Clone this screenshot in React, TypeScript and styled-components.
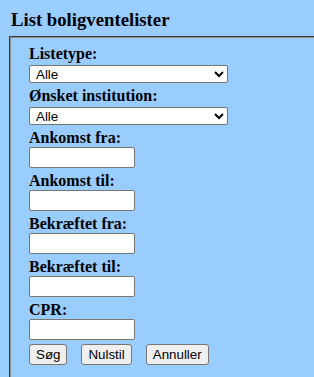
import React from 'react';
import styled, { createGlobalStyle } from 'styled-components';

const GlobalStyle = createGlobalStyle`
  html, body {
    margin: 0;
    padding: 0;
    background: #99ccff;
  }
  body {
    font-family: 'Liberation Serif', 'Times New Roman', serif;
    color: #000;
  }
`;

const Page = styled.div`
  padding: 9px 0 0 9px;
  width: 314px;
  height: 377px;
  box-sizing: border-box;
  overflow: hidden;
`;

const Title = styled.h3`
  margin: 0 0 6px 2px;
  font-size: 18.72px;
  font-weight: bold;
  line-height: 21px;
`;

const Panel = styled.fieldset`
  margin: 0;
  width: 340px;
  min-height: 360px;
  border: 2px groove #c0c0c0;
  border-color: #8e8e8e #c8c8c8 #c8c8c8 #8e8e8e;
  padding: 7px 0 0 18px;
  box-sizing: border-box;
`;

const Field = styled.div<{ $kind: 'select' | 'text' }>`
  display: flex;
  flex-direction: column;
  align-items: flex-start;
  margin-bottom: 4px;
  gap: ${({ $kind }) => ($kind === 'select' ? '2px' : '0')};
`;

const Label = styled.label`
  font-size: 16px;
  font-weight: bold;
  line-height: 18px;
`;

const Select = styled.select`
  width: 199px;
  height: 18px;
  font-family: 'Liberation Sans', Arial, sans-serif;
  font-size: 13.33px;
  background: #fff;
  border: 1px solid #767676;
  border-radius: 2px;
  padding: 0 0 0 2px;
  margin: 0;
  box-sizing: border-box;
`;

const TextInput = styled.input`
  width: 106px;
  height: 21px;
  font-family: 'Liberation Sans', Arial, sans-serif;
  font-size: 13.33px;
  background: #fff;
  border: 1px solid #767676;
  border-radius: 2px;
  padding: 1px 2px;
  margin: 0;
  box-sizing: border-box;
`;

const Buttons = styled.div`
  display: flex;
  gap: 14px;
`;

const Button = styled.button`
  height: 21px;
  font-family: 'Liberation Sans', Arial, sans-serif;
  font-size: 13.33px;
  background: #efefef;
  border: 1px solid #767676;
  border-radius: 3px;
  padding: 1px 6px;
  margin: 0;
  color: #000;
  box-sizing: border-box;
`;

const textFields = ['Ankomst fra:', 'Ankomst til:', 'Bekræftet fra:', 'Bekræftet til:', 'CPR:'];

export default function App() {
  return (
    <>
      <GlobalStyle />
      <Page>
        <Title>List boligventelister</Title>
        <Panel>
          <Field $kind="select">
            <Label>Listetype:</Label>
            <Select defaultValue="alle">
              <option value="alle">Alle</option>
            </Select>
          </Field>
          <Field $kind="select">
            <Label>Ønsket institution:</Label>
            <Select defaultValue="alle">
              <option value="alle">Alle</option>
            </Select>
          </Field>
          {textFields.map((f) => (
            <Field key={f} $kind="text">
              <Label>{f}</Label>
              <TextInput type="text" />
            </Field>
          ))}
          <Buttons>
            <Button>Søg</Button>
            <Button>Nulstil</Button>
            <Button>Annuller</Button>
          </Buttons>
        </Panel>
      </Page>
    </>
  );
}
